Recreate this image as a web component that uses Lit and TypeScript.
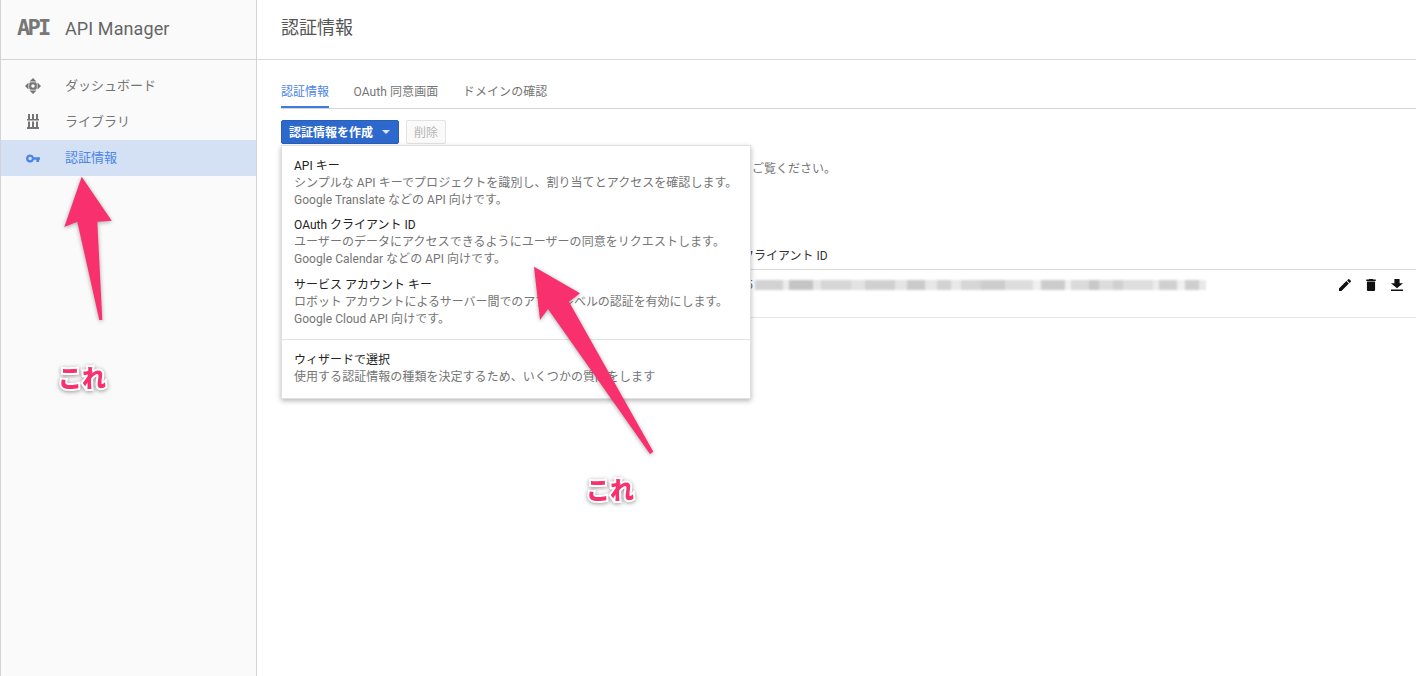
import { LitElement, html, css, svg } from "lit";
import { customElement } from "lit/decorators.js";

const blurBlocks: [number, string][] = [
  [28, "#d2d2d2"], [6, "#ececec"], [24, "#c4c4c4"], [8, "#e6e6e6"], [30, "#d6d6d6"], [14, "#e2e2e2"],
  [30, "#d0d0d0"], [12, "#e4e4e4"], [18, "#cacaca"], [12, "#e6e6e6"], [14, "#d2d2d2"], [10, "#e8e8e8"],
  [20, "#d6d6d6"], [24, "#cdcdcd"], [28, "#dddddd"], [8, "#f0f0f0"], [24, "#cccccc"], [6, "#f0f0f0"],
  [18, "#dadada"], [10, "#c8c8c8"], [14, "#dcdcdc"], [10, "#d0d0d0"], [30, "#dedede"], [6, "#ececec"],
  [18, "#d0d0d0"], [8, "#f0f0f0"], [14, "#cecece"], [7, "#e8e8e8"],
];

@customElement("app-root")
export class AppRoot extends LitElement {
  static styles = css`
    :host { display: block; position: relative; width: 1416px; height: 676px; overflow: hidden; background: #fff;
      font-family: Roboto, "Noto Sans CJK JP", sans-serif; color: #666; font-size: 12px; }
    .page { display: flex; height: 676px; }
    .side { width: 255px; flex: none; background: #fafafa; border-left: 1px solid #d4d4d4; border-right: 1px solid #d4d4d4; }
    .brand { height: 59px; display: flex; align-items: center; border-bottom: 1px solid #d4d4d4; padding-left: 16px; }
    .logo { width: 48px; font: bold 22px "DejaVu Sans Mono", monospace; color: #777; letter-spacing: -2.7px; margin-bottom: 5px; }
    .brand-name { font-size: 18px; color: #666; letter-spacing: .1px; margin-bottom: 3px; }
    .nav { padding-top: 8px; }
    .nav-item { height: 36px; display: flex; align-items: center; font-size: 13px; color: #757575; }
    .nav-item.on { background: #d4e1f5; color: #4c85e6; }
    .nav-label { margin-bottom: 4px; }
    .nav-icon { width: 64px; display: flex; justify-content: center; }
    .nav-icon svg { display: block; }
    .main { flex: 1; min-width: 0; position: relative; }
    .head { height: 59px; border-bottom: 1px solid #d9d9d9; display: flex; align-items: center; padding-left: 24px; font-size: 18px; color: #555; }
    .head span { margin-bottom: 7px; }
    .body { padding: 20px 0 0 24px; }
    .tabs { display: flex; gap: 24.5px; border-bottom: 1px solid #d4d4d4; height: 28px; }
    .tab { height: 28px; line-height: 25px; color: #757575; letter-spacing: .08px; }
    .tab.on { color: #4c85e6; border-bottom: 2px solid #3f7bdc; height: 26px; letter-spacing: 0; }
    .actions { display: flex; gap: 7px; margin-top: 11px; height: 24px; }
    .create { display: flex; align-items: center; width: 118px; height: 24px; box-sizing: border-box; background: #2d69cc; border: 1px solid #2a5fb8;
      border-radius: 2px; color: #fff; font-weight: 700; padding: 0 0 2px 7px; }
    .caret { width: 0; height: 0; border: 4px solid transparent; border-top-color: #dbe6f7; border-bottom: 0; margin: 2px 0 0 9px; }
    .del { width: 40px; height: 24px; box-sizing: border-box; border: 1px solid #e3e3e3; background: #fafafa; color: #b5b5b5; border-radius: 2px;
      display: flex; align-items: center; justify-content: center; padding-bottom: 2px; }
    .note { margin: 15px 0 0 471px; line-height: 20px; color: #757575; }
    .th { margin-top: 66px; padding-left: 461px; height: 24px; line-height: 22px; color: #333; border-bottom: 1px solid #d9d9d9; }
    .row { height: 47px; border-bottom: 1px solid #e4e4e4; display: flex; padding-left: 465px; }
    .frag { line-height: 30px; height: 30px; width: 7px; color: #666; margin-right: 2px; }
    .blur { display: flex; height: 10px; margin-top: 10px; filter: blur(1px); }
    .blur i { display: block; height: 10px; flex: none; }
    .row-actions { margin-left: auto; display: flex; gap: 2px; padding: 3px 7px 0 0; }
    .row-actions svg { display: block; }
    .menu { position: absolute; left: 24px; top: 145px; width: 470px; height: 254px; box-sizing: border-box; background: #fff; border: 1px solid #e0e0e0;
      box-shadow: 0 2px 5px rgba(0,0,0,.28); padding: 12px 12px 0 12px; line-height: 17px; z-index: 2; }
    .mi { margin-bottom: 8.3px; }
    .mt { color: #222; }
    .md { color: #757575; white-space: nowrap; letter-spacing: .04px; }
    .md.tight { letter-spacing: -.06px; }
    .sep { height: 1px; background: #e2e2e2; margin: 11px -12px 12px; }
    .overlay { position: absolute; left: 0; top: 0; z-index: 5; pointer-events: none; filter: drop-shadow(0 1px 2px rgba(0,0,0,.35)); }
    .tag { position: absolute; z-index: 6; font-family: "Noto Sans CJK JP", sans-serif; font-weight: 900; font-size: 24px; line-height: 30px; color: #f8306e;
      -webkit-text-stroke: 4px #fff; paint-order: stroke fill; filter: drop-shadow(0 1px 2px rgba(0,0,0,.4)); }
    .tag.a { left: 58px; top: 362px; }
    .tag.b { left: 586px; top: 474px; }
  `;

  render() {
    return html`
      <div class="page">
        <aside class="side">
          <div class="brand"><span class="logo">API</span><span class="brand-name">API Manager</span></div>
          <div class="nav">
            <div class="nav-item"><span class="nav-icon">
              <svg width="18" height="18" viewBox="0 0 18 18" fill="#757575">
                <path d="M9 1l3.500 3.500h-7zM9 17l-3.500-3.500h7zM1 9l3.500-3.500v7zM17 9l-3.500 3.500v-7z"/>
                <path fill-rule="evenodd" d="M6.500 5.200h5l1.300 1.300v5l-1.300 1.300h-5l-1.300-1.300v-5zM9 7.200a1.800 1.800 0 100 3.600 1.800 1.800 0 000-3.600z"/>
              </svg></span><span class="nav-label">ダッシュボード</span></div>
            <div class="nav-item"><span class="nav-icon">
              <svg width="18" height="18" viewBox="0 0 18 18" fill="#757575">
                <path d="M4 1h2v5H4zM8 1h2v5H8zM12 1h2v5h-2zM3 6h12v1.500H3zM4 8.500h2V14H4zM8 8.500h2V14H8zM12 8.500h2V14h-2zM3 14h12v2H3z"/>
              </svg></span><span class="nav-label">ライブラリ</span></div>
            <div class="nav-item on"><span class="nav-icon">
              <svg width="14.500" height="9" viewBox="0 0 16 10" fill="#4c85e6">
                <path fill-rule="evenodd" d="M4.500.5a4.500 4.500 0 014.300 3H16v3h-1.500v2.500h-3V6.500H8.800a4.500 4.500 0 11-4.300-6zm0 2.600a1.900 1.900 0 100 3.800 1.900 1.900 0 000-3.800z"/>
              </svg></span><span class="nav-label">認証情報</span></div>
          </div>
        </aside>
        <main class="main">
          <div class="head"><span>認証情報</span></div>
          <div class="body">
            <div class="tabs">
              <div class="tab on">認証情報</div>
              <div class="tab">OAuth 同意画面</div>
              <div class="tab">ドメインの確認</div>
            </div>
            <div class="actions">
              <div class="create">認証情報を作成<span class="caret"></span></div>
              <div class="del">削除</div>
            </div>
            <div class="note">ご覧ください。</div>
            <div class="th">クライアント ID</div>
            <div class="row">
              <span class="frag">5</span>
              <div class="blur">${blurBlocks.map(([w, c]) => html`<i style="width:${w}px;background:${c}"></i>`)}</div>
              <div class="row-actions">
                <svg width="24" height="24" viewBox="0 0 24 24" fill="#111"><path transform="translate(3.960 3.960) scale(.67)" d="M3 17.250V21h3.750L17.810 9.940l-3.750-3.750L3 17.250zM20.710 7.040a1 1 0 000-1.410l-2.340-2.340a1 1 0 00-1.410 0l-1.830 1.830 3.750 3.750 1.830-1.830z"/></svg>
                <svg width="24" height="24" viewBox="0 0 24 24" fill="#111"><path d="M6 19c0 1.100.9 2 2 2h8c1.100 0 2-.9 2-2V7H6v12zM19 4h-3.500l-1-1h-5l-1 1H5v2h14V4z" transform="translate(3.840 3.840) scale(.68)"/></svg>
                <svg width="24" height="24" viewBox="0 0 24 24" fill="#111"><path d="M19 9h-4V3H9v6H5l7 7 7-7zM5 18v2h14v-2H5z" transform="translate(1.680 3.840) scale(.86 .71)"/></svg>
              </div>
            </div>
          </div>
          <div class="menu">
            <div class="mi"><div class="mt">API キー</div><div class="md">シンプルな API キーでプロジェクトを識別し、割り当てとアクセスを確認します。</div><div class="md">Google Translate などの API 向けです。</div></div>
            <div class="mi"><div class="mt">OAuth クライアント ID</div><div class="md">ユーザーのデータにアクセスできるようにユーザーの同意をリクエストします。</div><div class="md">Google Calendar などの API 向けです。</div></div>
            <div class="mi"><div class="mt">サービス アカウント キー</div><div class="md tight">ロボット アカウントによるサーバー間でのアプリ レベルの認証を有効にします。</div><div class="md">Google Cloud API 向けです。</div></div>
            <div class="sep"></div>
            <div class="mi"><div class="mt">ウィザードで選択</div><div class="md">使用する認証情報の種類を決定するため、いくつかの質問をします</div></div>
          </div>
        </main>
      </div>
      <svg class="overlay" width="1416" height="676" viewBox="0 0 1416 676" fill="#f8306e">
        ${svg`<path d="M81.700 176.700L111.700 220.700 97.300 221.700 102.300 320 99.300 320 77.300 221.700 64.300 227z"/>`}
        ${svg`<path d="M534 266.700L580 293.300 569 301.700 653.300 451.700 650 454 548 309 540 320z"/>`}
      </svg>
      <div class="tag a">これ</div>
      <div class="tag b">これ</div>
    `;
  }
}
